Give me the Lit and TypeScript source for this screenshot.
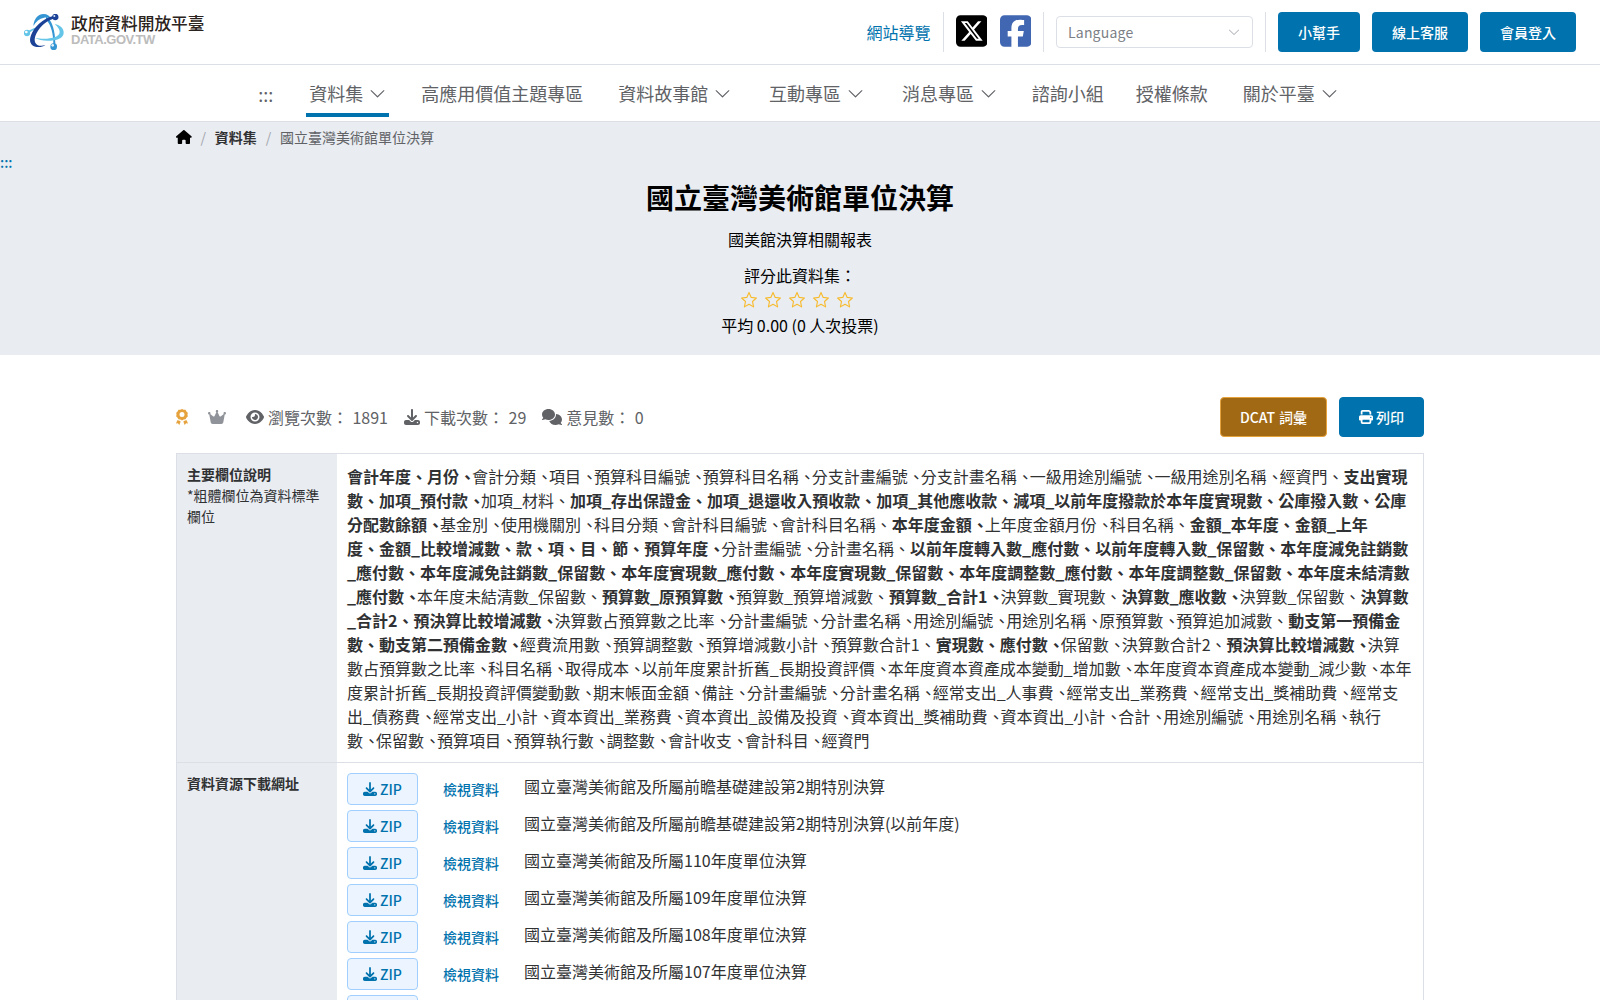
import { LitElement, html, css, svg, nothing } from "lit";
import { customElement, property } from "lit/decorators.js";

interface Glyph {
  box: string;
  path: string;
}

const ICONS: Record<string, Glyph> = {
  eye: {
    box: "0 0 576 512",
    path: "M288 32c-80.8 0-145.5 36.8-192.6 80.6C48.6 156 17.3 208 2.5 243.7c-3.3 7.9-3.3 16.7 0 24.6C17.3 304 48.6 356 95.4 399.4C142.5 443.2 207.2 480 288 480s145.5-36.8 192.6-80.6c46.8-43.5 78.1-95.4 93-131.1c3.3-7.9 3.3-16.7 0-24.6c-14.9-35.7-46.2-87.7-93-131.1C433.5 68.8 368.8 32 288 32zM144 256a144 144 0 1 1 288 0 144 144 0 1 1 -288 0zm144-64c0 35.3-28.7 64-64 64c-7.1 0-13.9-1.2-20.3-3.3c-5.5-1.8-11.9 1.6-11.7 7.4c.3 6.9 1.3 13.8 3.2 20.7c13.7 51.2 66.4 81.6 117.6 67.9s81.6-66.4 67.9-117.6c-11.1-41.5-47.8-69.4-88.6-71.1c-5.8-.2-9.2 6.1-7.4 11.7c2.1 6.4 3.3 13.2 3.3 20.3z",
  },
  download: {
    box: "0 0 512 512",
    path: "M288 32c0-17.7-14.3-32-32-32s-32 14.3-32 32V274.7l-73.4-73.4c-12.5-12.5-32.8-12.5-45.3 0s-12.5 32.8 0 45.3l128 128c12.5 12.5 32.8 12.5 45.3 0l128-128c12.5-12.5 12.5-32.8 0-45.3s-32.8-12.5-45.3 0L288 274.7V32zM64 352c-35.3 0-64 28.7-64 64v32c0 35.3 28.7 64 64 64H448c35.3 0 64-28.7 64-64V416c0-35.3-28.7-64-64-64H346.5l-45.3 45.3c-25 25-65.5 25-90.5 0L165.5 352H64zm368 56a24 24 0 1 1 0 48 24 24 0 1 1 0-48z",
  },
  comments: {
    box: "0 0 640 512",
    path: "M208 352c114.9 0 208-78.8 208-176S322.9 0 208 0S0 78.8 0 176c0 38.6 14.7 74.3 39.6 103.4c-3.5 9.4-8.7 17.7-14.2 24.7c-4.8 6.2-9.7 11-13.3 14.3c-1.8 1.6-3.3 2.9-4.3 3.7c-.5 .4-.9 .7-1.1 .8l-.2 .2 0 0 0 0C1 327.2-1.4 334.4 .8 340.9S9.1 352 16 352c21.8 0 43.8-5.6 62.1-12.5c9.2-3.5 17.8-7.4 25.3-11.4C134.1 343.3 169.8 352 208 352zM448 176c0 112.3-99.1 196.9-216.5 207C255.8 457.4 336.4 512 432 512c38.2 0 73.9-8.7 104.7-23.9c7.5 4 16 7.9 25.2 11.4c18.3 6.9 40.3 12.5 62.1 12.5c6.9 0 13.1-4.5 15.2-11.1c2.1-6.6-.2-13.8-5.8-17.9l0 0 0 0-.2-.2c-.2-.2-.6-.4-1.1-.8c-1-.8-2.5-2-4.3-3.7c-3.6-3.3-8.5-8.1-13.3-14.3c-5.5-7-10.7-15.4-14.2-24.7c24.9-29 39.6-64.7 39.6-103.4c0-92.8-84.9-168.9-192.6-175.5c.4 5.1 .6 10.3 .6 15.5z",
  },
  print: {
    box: "0 0 512 512",
    path: "M128 0C92.7 0 64 28.7 64 64v96h64V64H354.7L384 93.3V160h64V93.3c0-17-6.7-33.3-18.7-45.3L400 18.7C388 6.7 371.7 0 354.7 0H128zM384 352v32 64H128V384 368 352H384zm64 32h32c17.7 0 32-14.3 32-32V256c0-35.3-28.7-64-64-64H64c-35.3 0-64 28.7-64 64v96c0 17.7 14.3 32 32 32H64v64c0 35.3 28.7 64 64 64H384c35.3 0 64-28.7 64-64V384zM432 248a24 24 0 1 1 0 48 24 24 0 1 1 0-48z",
  },
  crown: {
    box: "0 0 576 512",
    path: "M309 106c11.4-7 19-19.7 19-34c0-22.1-17.9-40-40-40s-40 17.9-40 40c0 14.4 7.6 27 19 34L209.7 220.6c-9.1 18.2-32.7 23.4-48.6 10.7L72 160c5-6.7 8-15 8-24c0-22.1-17.9-40-40-40S0 113.9 0 136s17.9 40 40 40c.2 0 .5 0 .7 0L86.4 427.4c5.5 30.4 32 52.6 63 52.6H426.6c30.9 0 57.4-22.1 63-52.6L535.3 176c.2 0 .5 0 .7 0c22.1 0 40-17.9 40-40s-17.9-40-40-40s-40 17.9-40 40c0 9 3 17.3 8 24l-89.1 71.3c-15.9 12.7-39.5 7.5-48.6-10.7L309 106z",
  },
  house: {
    box: "0 0 576 512",
    path: "M575.8 255.5c0 18-15 32.1-32 32.1h-32l.7 160.2c0 2.7-.2 5.4-.5 8.1V472c0 22.1-17.9 40-40 40H456c-1.1 0-2.2 0-3.3-.1c-1.4 .1-2.8 .1-4.2 .1H416 392c-22.1 0-40-17.9-40-40V448 384c0-17.7-14.3-32-32-32H256c-17.7 0-32 14.3-32 32v64 24c0 22.1-17.9 40-40 40H160 128.1c-1.5 0-3-.1-4.5-.2c-1.2 .1-2.4 .2-3.6 .2H104c-22.1 0-40-17.9-40-40V360c0-.9 0-1.9 .1-2.8V287.6H32c-18 0-32-14-32-32.1c0-9 3-17 10-24L266.4 8c7-7 15-8 22-8s15 2 21 7L564.8 231.5c8 7 12 15 11 24z",
  },
  x: {
    box: "0 0 448 512",
    path: "M64 32C28.7 32 0 60.7 0 96V416c0 35.3 28.7 64 64 64H384c35.3 0 64-28.7 64-64V96c0-35.3-28.7-64-64-64H64zm297.1 84L257.3 234.6 379.4 396H283.8L209 298.1 123.3 396H75.8l111-126.9L69.7 116h98l67.7 89.5L313.6 116h47.5zM323.3 367.6L153.4 142.9H125.1L296.9 367.6h26.3z",
  },
  facebook: {
    box: "0 0 448 512",
    path: "M64 32C28.7 32 0 60.7 0 96V416c0 35.3 28.7 64 64 64h98.2V334.2H109.4V256h52.8V222.3c0-87.1 39.4-127.5 125-127.5c16.2 0 44.2 3.2 55.7 6.4V172c-6-.6-16.5-1-29.6-1c-42 0-58.2 15.9-58.2 57.2V256h83.6l-14.4 78.2H255V480H384c35.3 0 64-28.7 64-64V96c0-35.3-28.7-64-64-64H64z",
  },
  award: {
    box: "0 0 12 16",
    path: "M6 0l1.700.700 1.900.1.800 1.700 1.400 1.200-.3 1.900.3 1.900-1.400 1.200-.8 1.600-1.900.2L6 11.400l-1.700-.9-1.900-.2-.8-1.600L.2 7.500l.3-1.900-.3-1.900 1.400-1.200.8-1.700 1.900-.1L6 0zM6 3.100a2.500 2.500 0 1 0 0 5 2.500 2.500 0 0 0 0-5zM1.300 11.200l1.700.2 1.700 1L3.300 16l-1.400-1.700-1.900.2zM10.700 11.200l-1.700.2-1.700 1L8.700 16l1.400-1.700 1.900.2z",
  },
};

/** Solid glyph; its font-size sets the height. */
@customElement("glyph-icon")
export class GlyphIcon extends LitElement {
  @property() name = "eye";

  static styles = css`
    :host {
      display: inline-flex;
      flex: none;
    }
    .glyph {
      height: 1em;
      width: auto;
      fill: currentColor;
      display: block;
    }
  `;

  render() {
    const g = ICONS[this.name];
    const [, , w, h] = g.box.split(" ").map(Number);
    return html`<svg class="glyph" viewBox=${g.box} style="width:${w / h}em" aria-hidden="true">
      ${svg`<path fill-rule="evenodd" d=${g.path}></path>`}
    </svg>`;
  }
}

@customElement("chevron-icon")
export class ChevronIcon extends LitElement {
  static styles = css`
    :host {
      display: inline-flex;
      flex: none;
    }
    .chevron {
      width: 1em;
      height: 1em;
      fill: currentColor;
      display: block;
    }
  `;

  render() {
    return html`<svg class="chevron" viewBox="0 0 1024 1024" aria-hidden="true">
      <path
        d="M831.872 340.864 512 652.672 192.128 340.864a30.592 30.592 0 0 0-42.752 0 29.120 29.120 0 0 0 0 41.600L489.664 714.240a32 32 0 0 0 44.672 0l340.288-331.712a29.120 29.120 0 0 0 0-41.728 30.592 30.592 0 0 0-42.752 0z"
      ></path>
    </svg>`;
  }
}

@customElement("site-header")
export class SiteHeader extends LitElement {
  static styles = css`
    :host {
      display: block;
      height: 64px;
      border-bottom: 1px solid #dcdfe6;
    }
    .bar {
      display: flex;
      justify-content: space-between;
      align-items: center;
      height: 64px;
      padding: 0 24px;
    }
    .brand {
      display: flex;
      align-items: center;
      gap: 7px;
    }
    .emblem {
      width: 40px;
      height: 36px;
      display: block;
    }
    .names {
      display: flex;
      flex-direction: column;
      padding-bottom: 3px;
    }
    .zh {
      font-size: 16.7px;
      font-weight: 500;
      line-height: 19px;
      color: #2b2320;
    }
    .en {
      font: bold 13px/14px "Liberation Sans", sans-serif;
      letter-spacing: -0.5px;
      color: #bcbcbc;
    }
    .tools {
      display: flex;
      align-items: center;
    }
    .link {
      color: #0072ad;
      font-size: 16px;
      line-height: 24px;
    }
    .rule {
      width: 1px;
      height: 40px;
      background: #dcdfe6;
      margin: 0 12px;
    }
    .social {
      display: flex;
      gap: 12.500px;
      font-size: 36px;
      position: relative;
      top: -1px;
    }
    .x {
      color: #000;
    }
    .fb {
      color: #4267b2;
    }
    .select {
      box-sizing: border-box;
      width: 197px;
      height: 32px;
      border: 1px solid #dcdfe6;
      border-radius: 4px;
      display: flex;
      align-items: center;
      justify-content: space-between;
      padding: 0 11px;
      font-size: 14px;
      letter-spacing: 0.2px;
      color: #7c7f86;
    }
    .arrow {
      font-size: 14px;
      color: #a8abb2;
    }
    .actions {
      display: flex;
      gap: 12px;
    }
    .btn {
      height: 40px;
      padding: 0 20px;
      border: none;
      border-radius: 4px;
      background: #0072ad;
      color: #fff;
      font: 500 14px/14px "Noto Sans CJK TC", sans-serif;
    }
  `;

  render() {
    return html`<div class="bar">
      <div class="brand">
        <svg class="emblem" viewBox="0 0 120 108" aria-hidden="true">
          <path d="M28 36C30 12 44 0 58 0c12 0 20 6 26 17-8-6-16-8-24-6C46 14 36 22 28 36z" fill="#3595d3" />
          <path d="M66 8c18 8 28 42 28 82l-6 0C88 62 82 34 66 16z" fill="#3595d3" />
          <path d="M92 30c18 4 27 14 27 26 0 16-20 24-48 24-16 0-28-3-38-8 14 2 24 3 36 2 24-2 38-9 38-20 0-8-6-16-15-24z" fill="#64c5e8" />
          <path d="M8 54C22 44 34 40 44 38l-4 6C30 47 20 51 11 60z" fill="#64c5e8" />
          <path d="M92 13C64 20 42 44 34 66c-5 16 0 26 12 29 8 1 12 0 18-2-6 5-16 7-26 6C20 97 14 82 21 64 30 38 56 14 90 5z" fill="#1b4296" />
          <circle cx="94" cy="9" r="9.500" fill="#1b4296" />
          <circle cx="9" cy="57" r="9.500" fill="#64c5e8" />
          <circle cx="89" cy="98" r="10" fill="#3595d3" />
          <circle cx="91" cy="6" r="3" fill="#d8e6f7" />
          <circle cx="7" cy="54" r="4" fill="#fff" />
          <circle cx="86" cy="94" r="4" fill="#e2f2fb" />
        </svg>
        <div class="names">
          <span class="zh">政府資料開放平臺</span>
          <span class="en">DATA.GOV.TW</span>
        </div>
      </div>
      <div class="tools">
        <span class="link">網站導覽</span>
        <span class="rule"></span>
        <div class="social">
          <glyph-icon class="x" name="x"></glyph-icon>
          <glyph-icon class="fb" name="facebook"></glyph-icon>
        </div>
        <span class="rule"></span>
        <div class="select">Language<chevron-icon class="arrow"></chevron-icon></div>
        <span class="rule"></span>
        <div class="actions">
          <button class="btn">小幫手</button>
          <button class="btn">線上客服</button>
          <button class="btn">會員登入</button>
        </div>
      </div>
    </div>`;
  }
}

const MENU: { label: string; sub?: boolean; active?: boolean }[] = [
  { label: "資料集", sub: true, active: true },
  { label: "高應用價值主題專區" },
  { label: "資料故事館", sub: true },
  { label: "互動專區", sub: true },
  { label: "消息專區", sub: true },
  { label: "諮詢小組" },
  { label: "授權條款" },
  { label: "關於平臺", sub: true },
];

@customElement("site-nav")
export class SiteNav extends LitElement {
  static styles = css`
    :host {
      display: block;
      border-bottom: 1px solid #dcdfe6;
    }
    .nav {
      display: flex;
      justify-content: center;
      gap: 32px;
      height: 56px;
      font-size: 18px;
      color: #606266;
      padding-right: 1px;
    }
    .item {
      box-sizing: border-box;
      height: 52px;
      display: flex;
      align-items: center;
      border-bottom: 4px solid transparent;
      padding-top: 8px;
      white-space: nowrap;
    }
    .sub {
      padding-left: 3px;
      padding-right: 2px;
    }
    .active {
      border-bottom-color: #0072ad;
    }
    .arrow {
      font-size: 19px;
      margin-left: 4.900px;
    }
    .skip {
      margin-right: 1px;
      padding-top: 9px;
    }
  `;

  render() {
    return html`<nav class="nav">
      <span class="item skip">:::</span>
      ${MENU.map(
        (m) => html`<span class="item ${m.sub ? "sub" : ""} ${m.active ? "active" : ""}"
          >${m.label}${m.sub ? html`<chevron-icon class="arrow"></chevron-icon>` : nothing}</span
        >`,
      )}
    </nav>`;
  }
}

@customElement("dataset-hero")
export class DatasetHero extends LitElement {
  static styles = css`
    :host {
      display: block;
      height: 233px;
      background: #e9ecf1;
      color: #000;
    }
    .crumbs {
      width: 1248px;
      margin: 0 auto;
      height: 30px;
      display: flex;
      align-items: center;
      font-size: 14px;
      color: #606266;
    }
    .home {
      color: #000;
      font-size: 14px;
    }
    .slash {
      color: #a3a6ad;
      margin: 0 8.800px;
    }
    .parent {
      font-weight: 700;
      color: #303133;
    }
    .skip {
      color: #0072ad;
      font-size: 14px;
      font-weight: 500;
      line-height: 21px;
      height: 24px;
    }
    .center {
      display: flex;
      flex-direction: column;
      align-items: center;
      font-size: 16px;
      line-height: 24px;
    }
    .title {
      margin: 0;
      font-size: 28px;
      line-height: 42px;
      font-weight: 700;
    }
    .desc {
      margin-top: 9px;
      margin-bottom: 12px;
    }
    .stars {
      display: flex;
      gap: 6px;
      height: 26px;
      align-items: center;
      padding-right: 6px;
    }
    .star {
      width: 18px;
      height: 18px;
      fill: none;
      stroke: #f7ba2a;
      stroke-width: 1.100;
      stroke-linejoin: round;
    }
  `;

  render() {
    return html`
      <div class="crumbs">
        <glyph-icon class="home" name="house"></glyph-icon>
        <span class="slash">/</span><span class="parent">資料集</span>
        <span class="slash">/</span><span>國立臺灣美術館單位決算</span>
      </div>
      <div class="skip">:::</div>
      <div class="center">
        <h1 class="title">國立臺灣美術館單位決算</h1>
        <span class="desc">國美館決算相關報表</span>
        <span>評分此資料集：</span>
        <div class="stars">
          ${[1, 2, 3, 4, 5].map(
            () => html`<svg class="star" viewBox="0 0 18 18">
              <path
                d="M9 1.600l2.200 4.800 5.200.6-3.900 3.500 1.100 5.400L9 13.200l-4.600 2.700 1.100-5.400L1.600 7l5.200-.6z"
              ></path>
            </svg>`,
          )}
        </div>
        <span>平均 0.00 (0 人次投票)</span>
      </div>
    `;
  }
}

// Fields of the data standard are wrapped in asterisks and drawn in bold.
const FIELDS =
  "*會計年度*,*月份*,會計分類,項目,預算科目編號,預算科目名稱,分支計畫編號,分支計畫名稱,一級用途別編號,一級用途別名稱,經資門," +
  "*支出實現數*,*加項_預付款*,加項_材料,*加項_存出保證金*,*加項_退還收入預收款*,*加項_其他應收款*,*減項_以前年度撥款於本年度實現數*," +
  "*公庫撥入數*,*公庫分配數餘額*,基金別,使用機關別,科目分類,會計科目編號,會計科目名稱,*本年度金額*,上年度金額月份,科目名稱," +
  "*金額_本年度*,*金額_上年度*,*金額_比較增減數*,*款*,*項*,*目*,*節*,*預算年度*,分計畫編號,分計畫名稱,*以前年度轉入數_應付數*," +
  "*以前年度轉入數_保留數*,*本年度減免註銷數_應付數*,*本年度減免註銷數_保留數*,*本年度實現數_應付數*,*本年度實現數_保留數*," +
  "*本年度調整數_應付數*,*本年度調整數_保留數*,*本年度未結清數_應付數*,本年度未結清數_保留數,*預算數_原預算數*,預算數_預算增減數," +
  "*預算數_合計1*,決算數_實現數,*決算數_應收數*,決算數_保留數,*決算數_合計2*,*預決算比較增減數*,決算數占預算數之比率,分計畫編號," +
  "分計畫名稱,用途別編號,用途別名稱,原預算數,預算追加減數,*動支第一預備金數*,*動支第二預備金數*,經費流用數,預算調整數," +
  "預算增減數小計,預算數合計1,*實現數*,*應付數*,保留數,決算數合計2,*預決算比較增減數*,決算數占預算數之比率,科目名稱,取得成本," +
  "以前年度累計折舊_長期投資評價,本年度資本資產成本變動_增加數,本年度資本資產成本變動_減少數,本年度累計折舊_長期投資評價變動數," +
  "期末帳面金額,備註,分計畫編號,分計畫名稱,經常支出_人事費,經常支出_業務費,經常支出_獎補助費,經常支出_債務費,經常支出_小計," +
  "資本資出_業務費,資本資出_設備及投資,資本資出_獎補助費,資本資出_小計,合計,用途別編號,用途別名稱,執行數,保留數,預算項目," +
  "預算執行數,調整數,會計收支,會計科目,經資門";

// Separators stay on the same line as the fields on both sides of them.
const WIDE_MARK = "、\u2060";
const TIGHT_MARK = "\u00a0、\u2060";

const FILES = [
  "國立臺灣美術館及所屬前瞻基礎建設第2期特別決算",
  "國立臺灣美術館及所屬前瞻基礎建設第2期特別決算(以前年度)",
  "國立臺灣美術館及所屬110年度單位決算",
  "國立臺灣美術館及所屬109年度單位決算",
  "國立臺灣美術館及所屬108年度單位決算",
  "國立臺灣美術館及所屬107年度單位決算",
  "國立臺灣美術館及所屬106年度單位決算",
];

@customElement("dataset-body")
export class DatasetBody extends LitElement {
  static styles = css`
    :host {
      display: block;
      width: 1248px;
      margin: 0 auto;
      padding-top: 42px;
      color: #303133;
    }
    .meta {
      display: flex;
      align-items: center;
      height: 40px;
      font-size: 16px;
      color: #606266;
      margin-bottom: 16px;
    }
    .award {
      color: #e6a23c;
      margin-right: 20px;
    }
    .crown {
      color: #909399;
      margin-right: 20px;
    }
    .stat {
      display: flex;
      align-items: center;
      gap: 4px;
      margin-right: 16px;
      white-space: pre;
      word-spacing: 0.9px;
    }
    .actions {
      margin-left: auto;
      display: flex;
      gap: 12px;
    }
    .btn {
      box-sizing: border-box;
      height: 40px;
      display: flex;
      align-items: center;
      gap: 3px;
      padding: 0 19px;
      border: 1px solid #0072ad;
      border-radius: 4px;
      background: #0072ad;
      color: #fff;
      font-size: 14px;
      font-weight: 500;
      word-spacing: 0.8px;
    }
    .dcat {
      background: #a16914;
      border-color: #e6a23c;
    }
    .table {
      border: 1px solid #dcdfe6;
    }
    .row {
      display: grid;
      grid-template-columns: 160px 1fr;
    }
    .row + .row {
      border-top: 1px solid #dcdfe6;
    }
    .head {
      background: #e9ecf1;
      padding: 10px;
      font-size: 14px;
      line-height: 21px;
    }
    .bold {
      font-weight: 700;
    }
    .cell {
      padding: 10px;
      font-size: 16px;
      line-height: 24px;
    }
    .tight {
      font-feature-settings: "halt";
      word-spacing: 0.900px;
      margin-right: 0.440px;
    }
    .file {
      display: flex;
      height: 32px;
      margin-bottom: 5px;
    }
    .zip {
      box-sizing: border-box;
      width: 71px;
      height: 32px;
      display: flex;
      align-items: center;
      justify-content: center;
      gap: 3px;
      border: 1px solid #a0cfff;
      border-radius: 4px;
      background: #ecf5ff;
      color: #0072ad;
      font-size: 14px;
      font-weight: 500;
    }
    .view {
      width: 56px;
      margin: 0 25px;
      line-height: 32px;
      font-size: 14px;
      font-weight: 500;
      color: #0072ad;
    }
    .name {
      line-height: 26px;
    }
  `;

  private fields() {
    const list = FIELDS.split(",").map((f) => ({
      bold: f.startsWith("*"),
      text: f.replace(/\*/g, ""),
    }));
    return list.map((f, i) => {
      const next = list[i + 1];
      const weight = f.bold ? "bold" : "plain";
      if (!next || next.bold) {
        return html`<span class=${weight}>${f.text + (next ? WIDE_MARK : "")}</span>`;
      }
      return html`<span class=${weight}>${f.text}</span><span class="tight ${weight}">${TIGHT_MARK}</span>`;
    });
  }

  render() {
    return html`
      <div class="meta">
        <glyph-icon class="award" name="award"></glyph-icon>
        <glyph-icon class="crown" name="crown"></glyph-icon>
        <span class="stat"><glyph-icon name="eye"></glyph-icon>瀏覽次數： 1891</span>
        <span class="stat"><glyph-icon name="download"></glyph-icon>下載次數： 29</span>
        <span class="stat"><glyph-icon name="comments"></glyph-icon>意見數： 0</span>
        <div class="actions">
          <span class="btn dcat">DCAT 詞彙</span>
          <span class="btn"><glyph-icon name="print"></glyph-icon>列印</span>
        </div>
      </div>
      <div class="table">
        <div class="row">
          <div class="head"><div class="bold">主要欄位說明</div>*粗體欄位為資料標準欄位</div>
          <div class="cell">${this.fields()}</div>
        </div>
        <div class="row">
          <div class="head"><div class="bold">資料資源下載網址</div></div>
          <div class="cell">
            ${FILES.map(
              (name) => html`<div class="file">
                <span class="zip"><glyph-icon name="download"></glyph-icon>ZIP</span>
                <span class="view">檢視資料</span>
                <span class="name">${name}</span>
              </div>`,
            )}
          </div>
        </div>
      </div>
    `;
  }
}

@customElement("app-root")
export class AppRoot extends LitElement {
  static styles = css`
    :host {
      display: block;
      width: 100%;
      height: 1000px;
      overflow: hidden;
      background: #fff;
      font-family: "Noto Sans CJK TC", "Noto Sans CJK JP", sans-serif;
    }
  `;

  render() {
    return html`
      <site-header></site-header>
      <site-nav></site-nav>
      <dataset-hero></dataset-hero>
      <dataset-body></dataset-body>
    `;
  }
}
